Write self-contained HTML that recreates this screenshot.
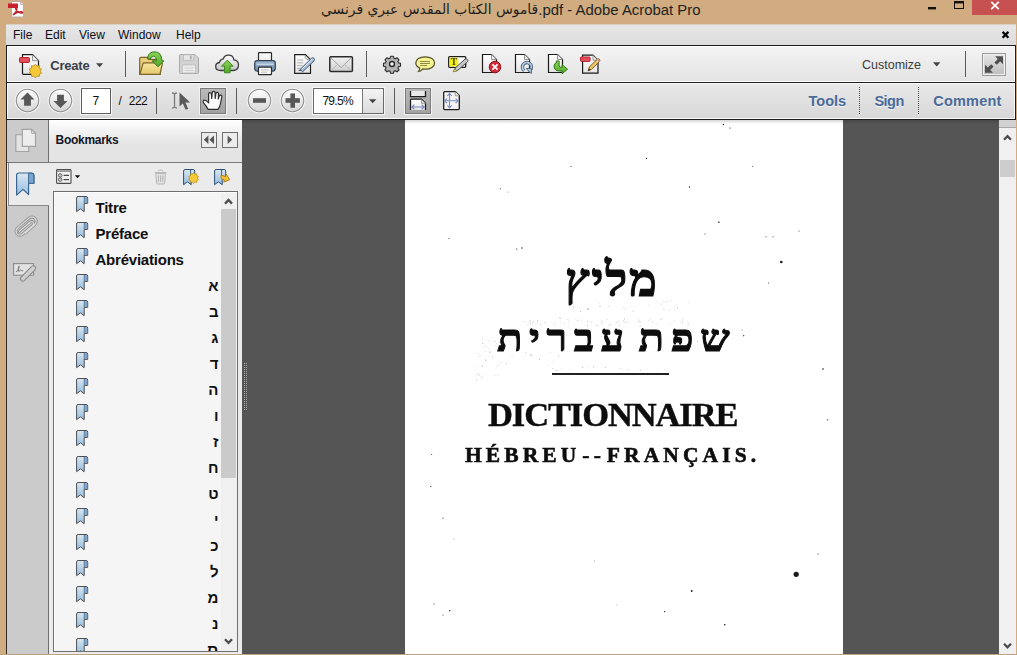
<!DOCTYPE html>
<html lang="en">
<head>
<meta charset="utf-8">
<title>Adobe Acrobat Pro</title>
<style>
*{box-sizing:border-box;margin:0;padding:0}
html,body{width:1017px;height:655px;overflow:hidden;background:#d0ac80}
body{position:relative;font-family:"Liberation Sans","DejaVu Sans",sans-serif;font-size:12px;color:#111}
.a{position:absolute}
.t{position:absolute;white-space:nowrap;line-height:1}
#ico{position:absolute;left:0;top:0;width:1017px;height:655px;overflow:hidden}
#ttext{left:321px;top:0px;height:22px;font-size:14.9px;color:#1f1f1f}
#ttext span{position:absolute;top:0;line-height:1}
#tar{left:0;font-size:13.85px;top:3px !important;font-family:"DejaVu Sans","Liberation Sans",sans-serif}
#tla{left:217.3px;top:3px !important}
#close{left:972px;top:0;width:45px;height:15px;background:#c75050}
#menu{left:6px;top:24px;width:1010px;height:21px;background:linear-gradient(#e6e6e6,#dcdcdc);border-top:1px solid #d8cfc2}
.mi{top:29px;font-size:12px;color:#0c0c1c}
.tb{left:6px;width:1010px;border:1px solid #1c1c1c}
#tb1{top:45px;height:38px;background:linear-gradient(#f4f4f4,#e3e3e3);box-shadow:inset 0 0 0 1px #fff}
#tb2{top:82px;height:38px;background:linear-gradient(#e9e9e9,#d7d7d7);box-shadow:inset 0 0 0 1px #fafafa}
.sep{width:1px;background:#5a5a5a;height:26px}
.dot{width:1px;height:27px;top:87px;background:repeating-linear-gradient(#4a4a4a 0 1px,transparent 1px 2px)}
.nav{font-weight:bold;font-size:14.5px;color:#4a6a98;top:93.6px;text-shadow:0 1px 0 #f4f4f4}
#navcol{left:7px;top:120px;width:41px;height:534px;background:#cbcbcb}
#bmhead{left:49px;top:120px;width:193px;height:42px;background:linear-gradient(#ffffff,#eeeeee 35%,#e4e4e4 60%,#e4e4e4)}
#panel{left:7px;top:163px;width:235px;height:491px;background:#ebebeb}
#bmline{left:7px;top:162px;width:235px;height:1px;background:#777}
#seltab{left:8px;top:163px;width:41px;height:43px;border-left:1px solid #8a8a8a;border-bottom:1px solid #8a8a8a}
#navlow{left:7px;top:206px;width:41px;height:448px;background:#cbcbcb}
.vdiv{left:48px;width:1px;background:#707070}
#list{left:53px;top:191px;width:185px;height:461px;background:#f5f5f5;border:1px solid #6f6f6f;box-shadow:inset 1px 1px 0 #fdfdfd}
#lsb{left:221px;top:193px;width:16px;height:458px;background:#f0f0f0}
#lthumb{left:221px;top:209px;width:15px;height:269px;background:#cacaca}
.bt{font-weight:bold;font-size:15px;color:#101010;left:95.5px;letter-spacing:-0.22px}
.he{font-weight:bold;font-size:15px;color:#101010;right:798.5px}
#doc{left:242px;top:120px;width:757px;height:534px;background:#555555}
#split{left:244px;top:363px;width:1px;height:47px;background:repeating-linear-gradient(#a9a9a9 0 1px,transparent 1px 2px)}
#split2{left:246px;top:363px;width:1px;height:47px;background:repeating-linear-gradient(#a9a9a9 0 1px,transparent 1px 2px)}
#page{left:405px;top:120px;width:438px;height:534px;background:#fff}
#vsb{left:999px;top:120px;width:17px;height:534px;background:#f0f0f0}
#vthumb{left:1000px;top:160px;width:15px;height:17px;background:#cdcdcd}
#vsplit{left:999px;top:120px;width:17px;height:8px;background:#d2d2d2;border-bottom:1px solid #a8a8a8}
.serif{font-family:"Liberation Serif","DejaVu Serif",serif;color:#0d0d0d;font-weight:bold;will-change:transform}
#pnum{left:81px;top:88px;width:30px;height:26px;background:#fff;border:1px solid #5f5f5f;box-shadow:0 0 0 1px #f6f6f6}
#zoom{left:313px;top:88px;width:71px;height:26px;background:#fff;border:1px solid #6a6a6a;box-shadow:0 0 0 1px #f6f6f6}
#zoomdd{left:362px;top:89px;width:21px;height:24px;background:linear-gradient(#f3f3f3,#dcdcdc);border-left:1px solid #7a7a7a}
.selbtn{top:88px;width:26px;height:26px;background:linear-gradient(#b9b9b9,#a2a2a2);border:1px solid #7b7b7b;box-shadow:0 0 0 1px #f2f2f2}
#expand{left:982px;top:53px;width:24px;height:23px;background:linear-gradient(#e6e6e6,#bdbdbd);border:1px solid #9a9a9a;box-shadow:inset 0 0 0 1px #f0f0f0}
.pbtn{top:132px;width:16px;height:16px;border:1px solid #707070;background:#ececec}
</style>
</head>
<body>
<div class="t" id="ttext"><span class="ar" id="tar" dir="rtl">قاموس الكتاب المقدس عبري فرنسي</span><span id="tla">.pdf - Adobe Acrobat Pro</span></div>
<div class="a" id="close"></div>
<div class="a" id="menu"></div>
<div class="t mi" style="left:13px">File</div>
<div class="t mi" style="left:45px">Edit</div>
<div class="t mi" style="left:79px">View</div>
<div class="t mi" style="left:118px">Window</div>
<div class="t mi" style="left:176px">Help</div>
<div class="a tb" id="tb1"></div>
<div class="a tb" id="tb2"></div>
<div class="a sep" style="left:125px;top:51px"></div>
<div class="a sep" style="left:366px;top:51px"></div>
<div class="a sep" style="left:965px;top:51px"></div>
<div class="a sep" style="left:156px;top:88px"></div>
<div class="a sep" style="left:236px;top:88px"></div>
<div class="a sep" style="left:394px;top:88px"></div>
<div class="t" id="create" style="left:50.2px;top:58.5px;font-weight:bold;font-size:13px;letter-spacing:-0.2px;color:#3b3f48">Create</div>
<div class="t" id="cust" style="left:862px;top:58.7px;font-size:12.5px;color:#3c3c3c">Customize</div>
<div class="a" id="expand"></div>
<div class="a" id="pnum"></div>
<div class="t" id="p7" style="left:92.6px;top:95px;font-size:12px;color:#111">7</div>
<div class="t" id="p222" style="left:118.5px;top:95px;font-size:12px;color:#111;word-spacing:4.6px;letter-spacing:-0.5px">/ 222</div>
<div class="a selbtn" style="left:200px"></div>
<div class="a" id="zoom"></div>
<div class="a" id="zoomdd"></div>
<div class="t" id="z79" style="left:322.4px;top:95px;font-size:12px;color:#111;letter-spacing:-0.7px">79.5%</div>
<div class="a selbtn" style="left:405px"></div>
<div class="a dot" style="left:859px"></div>
<div class="a dot" style="left:918px"></div>
<div class="t nav" id="ntools" style="left:808.5px">Tools</div>
<div class="t nav" id="nsign" style="left:874.4px;letter-spacing:-0.5px">Sign</div>
<div class="t nav" id="ncomm" style="left:933.3px;letter-spacing:0.2px">Comment</div>
<div class="a" style="left:6px;top:120px;width:1px;height:534px;background:#2e2b26"></div>
<div class="a" id="navcol"></div>
<div class="a" id="bmhead"></div>
<div class="a" id="panel"></div>
<div class="a" id="bmline"></div>
<div class="a" id="navlow"></div>
<div class="a" id="seltab"></div>
<div class="a vdiv" style="top:120px;height:42px"></div>
<div class="a vdiv" style="top:206px;height:448px"></div>
<div class="t" id="bmk" style="left:55.6px;top:134px;font-weight:bold;font-size:12px;letter-spacing:-0.3px;color:#15151f">Bookmarks</div>
<div class="a pbtn" style="left:201px"></div>
<div class="a pbtn" style="left:222px"></div>
<div class="a" id="list"></div>
<div class="a" id="lsb"></div>
<div class="a" id="lthumb"></div>
<div class="t bt" style="top:200px">Titre</div>
<div class="t bt" style="top:226px">Préface</div>
<div class="t bt" style="top:252px">Abréviations</div>
<div class="t he" style="top:278px" dir="rtl">א</div>
<div class="t he" style="top:304px" dir="rtl">ב</div>
<div class="t he" style="top:330px" dir="rtl">ג</div>
<div class="t he" style="top:356px" dir="rtl">ד</div>
<div class="t he" style="top:382px" dir="rtl">ה</div>
<div class="t he" style="top:408px" dir="rtl">ו</div>
<div class="t he" style="top:434px" dir="rtl">ז</div>
<div class="t he" style="top:460px" dir="rtl">ח</div>
<div class="t he" style="top:486px" dir="rtl">ט</div>
<div class="t he" style="top:512px" dir="rtl">י</div>
<div class="t he" style="top:538px" dir="rtl">כ</div>
<div class="t he" style="top:564px" dir="rtl">ל</div>
<div class="t he" style="top:590px" dir="rtl">מ</div>
<div class="t he" style="top:616px" dir="rtl">נ</div>
<div class="a" style="left:54px;top:634px;width:167px;height:17px;overflow:hidden"><div class="t he" style="right:3px;top:8px" dir="rtl">ס</div></div>
<div class="a" id="doc"></div>
<div class="a" id="split"></div>
<div class="a" id="split2"></div>
<div class="a" id="page"></div>
<div class="a" style="left:242px;top:120px;width:757px;height:4px;background:linear-gradient(rgba(0,0,0,.16),rgba(0,0,0,0))"></div>
<div class="a" id="vsb"></div>
<div class="a" style="left:0;top:654px;width:1017px;height:1px;background:#bfa27c"></div>
<div class="a" id="vthumb"></div>
<div class="a" id="vsplit"></div>
<div class="t serif" id="h1" dir="rtl" style="left:564.8px;top:256.5px;font-size:47px;letter-spacing:1.75px;-webkit-text-stroke:1.1px #0d0d0d">מליץ</div>
<div class="t serif" id="h2" dir="rtl" style="left:497px;top:320px;font-size:37.5px;letter-spacing:5.8px;word-spacing:-8.2px;transform:scaleX(1.12);transform-origin:0 0;-webkit-text-stroke:0.9px #0d0d0d">שפת עברית</div>
<div class="a" style="left:552px;top:373px;width:117px;height:2px;background:#222"></div>
<div class="t serif" id="d1" style="left:487.5px;top:396.5px;font-size:34.5px;letter-spacing:-1.1px;-webkit-text-stroke:0.4px #0d0d0d">DICTIONNAIRE</div>
<div class="t serif" id="d2" style="left:465px;top:444.5px;font-size:21.5px;letter-spacing:4.1px;word-spacing:-7.5px;-webkit-text-stroke:0.6px #0d0d0d">HÉBREU -- FRANÇAIS.</div>
<svg id="ico" viewBox="0 0 1017 655" width="1017" height="655">
<defs>
<linearGradient id="gBtn" x1="0" y1="0" x2="0" y2="1"><stop offset="0" stop-color="#ffffff"/><stop offset="1" stop-color="#d6d6d6"/></linearGradient>
<linearGradient id="gPage" x1="0" y1="0" x2="0" y2="1"><stop offset="0" stop-color="#ffffff"/><stop offset="1" stop-color="#e4e4e4"/></linearGradient>
<linearGradient id="gFold" x1="0" y1="0" x2="0" y2="1"><stop offset="0" stop-color="#f7e6a0"/><stop offset="1" stop-color="#e3c76c"/></linearGradient>
<linearGradient id="gGreen" x1="0" y1="0" x2="0" y2="1"><stop offset="0" stop-color="#8fd45a"/><stop offset="1" stop-color="#4fa52b"/></linearGradient>
<linearGradient id="gBm" x1="0" y1="0" x2="0" y2="1"><stop offset="0" stop-color="#dbe7f1"/><stop offset="1" stop-color="#94bde0"/></linearGradient>
<linearGradient id="gCloud" x1="0" y1="0" x2="0" y2="1"><stop offset="0" stop-color="#ffffff"/><stop offset="1" stop-color="#c4c4c4"/></linearGradient>
<linearGradient id="gEnv" x1="0" y1="0" x2="0" y2="1"><stop offset="0" stop-color="#f2f2f2"/><stop offset="1" stop-color="#cfcfcf"/></linearGradient>
<linearGradient id="gPrn" x1="0" y1="0" x2="0" y2="1"><stop offset="0" stop-color="#9fb9d2"/><stop offset="1" stop-color="#6d8cab"/></linearGradient>
<path id="pg" d="M0.5,0.5 h9 l5,5 v13 h-14 z"/>
<path id="bm" d="M0.6,2 q0,-1.5 1.5,-1.5 h8 q1.6,0 1.6,1.6 v5.3 h-3.5 v8.3 l-3.8,-2.9 l-3.8,2.9 z"/>
</defs>

<!-- title bar pdf icon -->
<g transform="translate(8,1)">
<path d="M3.5,0.5 h9 l3,3 v12.5 h-12 z" fill="#fff" stroke="#b9a9a9"/>
<path d="M12.5,0.5 v3 h3" fill="#eee" stroke="#b9a9a9" stroke-width=".8"/>
<path d="M5.3,13.6 c2.4,-1.8 3.6,-4.6 3.5,-7 c-0.1,-1.6 -1.7,-1.2 -1.2,0.6 c0.8,2.8 3.4,4.6 6,4.8 c1.4,0.1 1.1,-1.3 -0.6,-1.2 c-2.8,0.2 -5.6,1.2 -7.7,2.8 z" fill="none" stroke="#c01f2b" stroke-width="1.5" stroke-linejoin="round"/>
<rect x="0" y="2.5" width="10" height="4.5" fill="#c8202f"/>
</g>
<!-- window controls -->
<rect x="928" y="7" width="8" height="2.4" fill="#111"/>
<rect x="954.5" y="1.5" width="9" height="7" fill="none" stroke="#111"/>
<rect x="954" y="1" width="10" height="2.4" fill="#111"/>
<path d="M991.2,1.8 l7.6,7.4 M998.8,1.8 l-7.6,7.4" stroke="#fff" stroke-width="1.7" fill="none"/>
<path d="M1002.6,31.9 l5.8,5.8 M1008.4,31.9 l-5.8,5.8" stroke="#000" stroke-width="2.2" fill="none"/>

<!-- ===== toolbar 1 ===== -->
<!-- create -->
<g transform="translate(19,54)">
<path d="M3.5,0.7 h10 l6,6 v12.8 q0,0.8 -0.8,0.8 h-14.4 q-0.8,0 -0.8,-0.8 z" fill="url(#gPage)" stroke="#1a1a1a" stroke-width="1.2"/>
<path d="M13.5,0.7 v6 h6" fill="#e9e9e9" stroke="#8a8a8a" stroke-width=".9"/>
<rect x="0.5" y="3.5" width="10" height="5" rx="1" fill="#e4505a" stroke="#b31f2e"/>
<path d="M16.4,10.2 l1.5,1.9 2.4,-0.4 0.1,2.4 2.2,1 -1.3,2 1.3,2 -2.2,1 -0.1,2.4 -2.4,-0.4 -1.5,1.9 -1.5,-1.9 -2.4,0.4 -0.1,-2.4 -2.2,-1 1.3,-2 -1.3,-2 2.2,-1 0.1,-2.4 2.4,0.4 z" fill="#f4c838" stroke="#b88a1b" stroke-width=".8"/>
</g>
<path d="M96,63.3 h7.2 l-3.6,4 z" fill="#444"/>
<!-- open folder -->
<g transform="translate(139,52)">
<path d="M0.7,22.3 v-16 q0,-1 1,-1 h6 l2,2 h10.5 q1,0 1,1 v14 z" fill="#e9cf7a" stroke="#7a6328" stroke-width="1.2"/>
<path d="M0.9,22.3 l3,-10.5 q0.3,-1 1.3,-1 h17.3 q1,0 0.8,1 l-2.3,10.5 z" fill="url(#gFold)" stroke="#7a6328" stroke-width="1.2"/>
<path d="M8.4,5.8 Q10,-0.2 15.6,-0.2 Q22.6,0 23,8.8 L24.8,8.8 L19,14.8 L13.2,8.8 L17.4,8.8 Q17.4,4.4 14.6,4.2 Q12.2,4.2 11.2,7.2 Z" fill="url(#gGreen)" stroke="#2f7a14" stroke-width="1" stroke-linejoin="round"/>
</g>
<!-- save (disabled) -->
<g transform="translate(179,54)">
<path d="M0.5,1.5 q0,-1 1,-1 h14.5 l3.5,3.5 v14.5 q0,1 -1,1 h-17 q-1,0 -1,-1 z" fill="#d2d2d2" stroke="#a8a8a8"/>
<rect x="4.5" y="0.8" width="10" height="5.5" fill="#e6e6e6" stroke="#b5b5b5" stroke-width=".7"/>
<rect x="10.8" y="1.6" width="2" height="3.6" fill="#b0b0b0"/>
<rect x="3.5" y="11" width="13" height="8" fill="#ececec" stroke="#b8b8b8" stroke-width=".7"/>
<path d="M5.5,14 h9 M5.5,16.5 h9" stroke="#cfcfcf" stroke-width="1"/>
</g>
<!-- cloud upload -->
<g transform="translate(215,54)">
<path d="M5.5,16.5 q-4.8,0 -4.8,-4 q0,-3.4 3.8,-4 q0.6,-3.3 3.8,-3.6 q1.2,-3.7 5.2,-3.7 q4.6,0 5.4,4.6 q4.6,0.6 4.6,5 q0,5.7 -5.5,5.7 z" fill="url(#gCloud)" stroke="#3d3d3d" stroke-width="1.3"/>
<path d="M12.3,6.2 l5.8,6 h-3 v6.6 h-5.6 v-6.6 h-3 z" fill="url(#gGreen)" stroke="#3a8a1c" stroke-width="1"/>
</g>
<!-- printer -->
<g transform="translate(254,52)">
<rect x="4.5" y="0.7" width="13" height="10" rx="0.8" fill="url(#gPage)" stroke="#2b2b2b" stroke-width="1.2"/>
<rect x="0.7" y="8.7" width="20.6" height="10.4" rx="2.5" fill="url(#gPrn)" stroke="#2f3f52" stroke-width="1.2"/>
<path d="M2.5,12.2 h17" stroke="#dfe9f3" stroke-width="1"/>
<rect x="4.5" y="15.2" width="13" height="7.4" rx="0.6" fill="#fbfbfb" stroke="#2b2b2b" stroke-width="1.2"/>
<path d="M7,18 h8 M7,20.2 h6" stroke="#b5b5b5" stroke-width=".9"/>
</g>
<!-- edit / sign doc -->
<g transform="translate(294,54)">
<path d="M0.7,0.7 h10.8 l5,5 v13.6 h-15.8 z" fill="url(#gPage)" stroke="#1f1f1f" stroke-width="1.2"/>
<path d="M11.2,1 q-0.6,3.4 1.6,4.4 q1.8,0.5 3.4,0.3" fill="none" stroke="#8a8a8a" stroke-width=".9"/>
<path d="M3.3,6 h6 M3.3,8.8 h6 M3.3,11.6 h5 M3.3,14.4 h3.4" stroke="#a9a9a9" stroke-width=".9"/>
<path d="M4,17 l2.2,-1.4 l1,1.2 z" fill="#333"/>
<path d="M6.2,15.4 l11.4,-11.2 q1.3,-0.9 2.4,0.2 q1.1,1.2 0.1,2.4 l-11.5,11 z" fill="#a9c3dc" stroke="#3d5570" stroke-width="1"/>
<path d="M8.6,14.3 l9.8,-9.5" stroke="#e8f0f8" stroke-width="1"/>
</g>
<!-- envelope -->
<g transform="translate(329,56)">
<rect x="0.8" y="0.8" width="22.6" height="14.6" rx="1" fill="url(#gEnv)" stroke="#2b2b2b" stroke-width="1.5"/>
<path d="M2,2 l10.1,9.6 l10.1,-9.6" fill="none" stroke="#a4a4a4" stroke-width="1"/>
<path d="M2.2,14.2 l6.8,-6 M22,14.2 l-6.8,-6" fill="none" stroke="#b9b9b9" stroke-width=".9"/>
</g>
<!-- gear -->
<g transform="translate(392,64) scale(0.86)">
<path d="M-1.7,-9 h3.4 l0.5,2.3 l1.6,0.7 l2,-1.3 l2.4,2.4 l-1.3,2 l0.7,1.6 l2.3,0.5 v3.4 l-2.3,0.5 l-0.7,1.6 l1.3,2 l-2.4,2.4 l-2,-1.3 l-1.6,0.7 l-0.5,2.3 h-3.4 l-0.5,-2.3 l-1.6,-0.7 l-2,1.3 l-2.4,-2.4 l1.3,-2 l-0.7,-1.6 l-2.3,-0.5 v-3.4 l2.3,-0.5 l0.7,-1.6 l-1.3,-2 l2.4,-2.4 l2,1.3 l1.6,-0.7 z" fill="#b4b4b4" stroke="#2a2a2a" stroke-width="1.3" stroke-linejoin="round"/>
<circle r="2.9" fill="#efefef" stroke="#2a2a2a" stroke-width="1.6"/>
</g>
<!-- speech bubble -->
<g transform="translate(415,56)">
<path d="M10.2,0.8 c5.6,0 9.4,2.7 9.4,6.2 c0,3.6 -4,6.2 -9,6.2 c-1,0 -2,-0.1 -2.8,-0.3 c-1,1.4 -2.4,2.4 -4.2,2.6 c0.8,-0.9 1.2,-2.2 1,-3.6 c-2.4,-1.1 -3.8,-2.8 -3.8,-4.9 c0,-3.5 3.8,-6.2 9.4,-6.2 z" fill="#f5f291" stroke="#55512c" stroke-width="1.2"/>
<path d="M5,5.5 h10 M5,7.5 h10 M5,9.5 h7" stroke="#8f8c48" stroke-width="1" shape-rendering="crispEdges"/>
</g>
<!-- highlight text -->
<g transform="translate(448,56)">
<rect x="0.7" y="0.7" width="17" height="10.6" rx="1" fill="#fdfdfd" stroke="#1c1c1c" stroke-width="1.3"/>
<rect x="1.6" y="1.6" width="8.6" height="8.8" fill="#f4f01a"/>
<text x="5.9" y="9.4" font-family="Liberation Serif, DejaVu Serif, serif" font-weight="bold" font-size="9.5" text-anchor="middle" fill="#4a4400">T</text>
<path d="M6,15 l1.6,-3.4 l9.6,-8.6 q1.2,-0.6 2.2,0.4 q1,1.1 0.2,2.3 l-9.7,8.5 z" fill="#c9c9c9" stroke="#4b4b4b" stroke-width="1"/>
<path d="M5.2,15.8 l1.4,-3 l2.4,2.2 z" fill="#f2ef8a" stroke="#77743a" stroke-width=".8"/>
</g>
<!-- page + red x -->
<g transform="translate(482,54)">
<use href="#pg" fill="url(#gPage)" stroke="#1a1a1a" stroke-width="1.2"/>
<path d="M9.5,0.5 v5 h5" fill="#ececec" stroke="#8a8a8a" stroke-width=".9"/>
<circle cx="13" cy="13" r="5.8" fill="#d02b38" stroke="#8f1420" stroke-width="1"/>
<path d="M10.4,10.4 l5.2,5.2 M15.6,10.4 l-5.2,5.2" stroke="#fff" stroke-width="1.7"/>
</g>
<!-- page + rotate -->
<g transform="translate(515,54)">
<use href="#pg" fill="url(#gPage)" stroke="#1a1a1a" stroke-width="1.2"/>
<path d="M9.5,0.5 v5 h5" fill="#ececec" stroke="#8a8a8a" stroke-width=".9"/>
<path d="M9.2,16.6 a4.5,4.5 0 1 1 4.4,0.6" fill="none" stroke="#48607c" stroke-width="3.4"/>
<path d="M9.2,16.6 a4.5,4.5 0 1 1 4.4,0.6" fill="none" stroke="#b4cce4" stroke-width="1.7"/>
<path d="M11.2,14.6 h5.2 v5 z" fill="#b4cce4" stroke="#48607c" stroke-width=".9" stroke-linejoin="round"/>
</g>
<!-- page + green arrow -->
<g transform="translate(548,54)">
<use href="#pg" fill="url(#gPage)" stroke="#1a1a1a" stroke-width="1.2"/>
<path d="M9.5,0.5 v5 h5" fill="#ececec" stroke="#8a8a8a" stroke-width=".9"/>
<path d="M8.3,7 h2.8 v4.6 q0,1.8 2,1.8 h1 v-2.8 l5.4,4.6 l-5.4,4.6 v-2.8 h-2.6 q-5.4,0 -5.4,-5 q0,-2.6 2.2,-3 z" fill="url(#gGreen)" stroke="#2f7a14" stroke-width="1"/>
</g>
<!-- page + label + pencil -->
<g transform="translate(580,54)">
<path d="M2.6,1.2 h10.4 l5,5 v13 h-15.4 z" fill="url(#gPage)" stroke="#1a1a1a" stroke-width="1.2"/>
<path d="M13,1.2 v5 h5" fill="#ececec" stroke="#8a8a8a" stroke-width=".9"/>
<rect x="0.5" y="3" width="9.6" height="4.4" rx=".8" fill="#e4505a" stroke="#b31f2e"/>
<path d="M8.2,16.8 l1.2,-3.8 l8,-8 q1,-0.6 2,0.3 q0.9,1 0.2,2 l-8,8 z" fill="#f0c569" stroke="#7a5a1c" stroke-width="1"/>
<path d="M8.2,16.8 l0.8,-2.4 l1.6,1.6 z" fill="#222"/>
<path d="M17,5.4 l2.4,2.4" stroke="#e79aa8" stroke-width="1.6"/>
</g>
<!-- customize arrow -->
<path d="M933,62.3 h7.4 l-3.7,4.1 z" fill="#444"/>
<!-- expand icon -->
<g transform="translate(982,53)" fill="#4f4f4f">
<path d="M13,3.2 h8 v8 l-2.8,-2.8 l-3.4,3.4 l-2.4,-2.4 l3.4,-3.4 z"/>
<path d="M11,19.8 h-8 v-8 l2.8,2.8 l3.4,-3.4 l2.4,2.4 l-3.4,3.4 z"/>
</g>

<!-- ===== toolbar 2 ===== -->
<g fill="none" stroke="#f4f4f4" stroke-width="1.2"><circle cx="27.5" cy="100.5" r="12.2"/><circle cx="60.5" cy="100.5" r="12.2"/><circle cx="259.5" cy="100.5" r="12.2"/><circle cx="292.5" cy="100.5" r="12.2"/></g>
<g fill="url(#gBtn)" stroke="#939393" stroke-width="1.1">
<circle cx="27.5" cy="100.5" r="11.2"/>
<circle cx="60.5" cy="100.5" r="11.2"/>
<circle cx="259.5" cy="100.5" r="11.2"/>
<circle cx="292.5" cy="100.5" r="11.2"/>
</g>
<g fill="#585858">
<path d="M27.5,92.6 l7,7 h-3.6 v6.2 h-6.8 v-6.2 h-3.6 z"/>
<path d="M60.5,108 l7,-7 h-3.6 v-6.2 h-6.8 v6.2 h-3.6 z"/>
<rect x="253" y="98.2" width="13" height="4.6"/>
<rect x="285.5" y="98.2" width="14.4" height="4.6"/>
<rect x="290.4" y="93.4" width="4.6" height="14.4"/>
</g>
<!-- select tool -->
<path d="M172,93 q1.8,0 2.5,1 q0.7,-1 2.5,-1 M174.5,94 v13 M172,108 q1.8,0 2.5,-1 q0.7,1 2.5,1" fill="none" stroke="#7a7a7a" stroke-width="1.3"/>
<path d="M179.5,92.4 v14 l3.3,-3 l2.8,6.4 l2.6,-1.1 l-2.8,-6.2 h4.8 z" fill="#5a5a5a"/>
<!-- hand -->
<g transform="translate(200,88)">
<path d="M8.2,21.4 Q6.5,18 3.6,14.8 Q2.5,12.8 4.1,12.2 Q5.8,11.9 8.6,14.8 L8.6,6 Q8.6,4.6 10,4.6 Q11.4,4.6 11.4,6 L11.7,10.5 L12.2,4.8 Q12.3,3.4 13.7,3.4 Q15.1,3.4 15.1,4.8 L15.2,10.5 L15.9,5.5 Q16.1,4.2 17.3,4.3 Q18.6,4.5 18.5,5.8 L18.3,11 L19.2,8.1 Q19.7,6.8 20.9,7.1 Q22,7.5 21.8,8.8 L20.6,15 Q20,19 18,21.4 Z" fill="#fafafa" stroke="#2e2e2e" stroke-width="1.2" stroke-linejoin="round"/>
</g>
<!-- zoom dropdown arrow -->
<path d="M369,99.2 h7.4 l-3.7,4 z" fill="#444"/>
<!-- fit width -->
<g transform="translate(405,88)">
<path d="M5.5,3 v5.6 h15 v-5.6" fill="#e9e9e9" stroke="#1f1f1f" stroke-width="1.3"/>
<path d="M5.5,22 v-9.8 q0,-1 1,-1 h10 l4,4 v6.8" fill="url(#gPage)" stroke="#1f1f1f" stroke-width="1.3"/>
<path d="M16.5,11.4 v4 h4" fill="#ececec" stroke="#8a8a8a" stroke-width=".8"/>
<path d="M7,19 h12 M9.4,16.6 l-2.6,2.4 l2.6,2.4 M16.6,16.6 l2.6,2.4 l-2.6,2.4" fill="none" stroke="#7c86c0" stroke-width="1.1"/>
</g>
<!-- fit page -->
<g transform="translate(443,91)">
<path d="M0.7,1.6 q0,-1 1,-1 h10.6 l4,4 v13 q0,1 -1,1 h-13.6 q-1,0 -1,-1 z" fill="#f4f4f4" stroke="#1f1f1f" stroke-width="1.3"/>
<path d="M12.3,0.8 v4 h4" fill="#ececec" stroke="#8a8a8a" stroke-width=".8"/>
<path d="M6.5,2.6 v14 M1.8,9.8 h13" stroke="#7c8ec8" stroke-width="1.1"/>
<path d="M4.4,4.8 l2.1,-2.4 l2.1,2.4 M4.4,14.4 l2.1,2.4 l2.1,-2.4 M4,7.6 l-2.4,2.2 l2.4,2.2 M12.6,7.6 l2.4,2.2 l-2.4,2.2" fill="none" stroke="#7c8ec8" stroke-width="1.1"/>
</g>

<!-- ===== nav column ===== -->
<g transform="translate(15.2,128.8) scale(1.08,1.06)">
<path d="M0.6,5.6 h12 v15.8 h-12 z" fill="#e4e4e4" stroke="#a3a3a3" stroke-width="1.1"/>
<path d="M6.6,0.6 h8.6 l3.6,3.6 v12.4 h-12.2 z" fill="#ededed" stroke="#a3a3a3" stroke-width="1.1"/>
<path d="M15.2,0.8 v3.4 h3.4" fill="none" stroke="#9d9d9d" stroke-width=".9"/>
</g>
<g transform="translate(16,172.4) scale(1,0.94)">
<path d="M0.6,3 q0,-2.4 2.4,-2.4 h12.4 q2.6,0 2.6,2.6 v8.4 h-5.4 v12 l-5.6,-5.6 l-6.4,6.2 z" fill="url(#gBm)" stroke="#3a678f" stroke-width="1.2" stroke-linejoin="round"/>
<path d="M12.6,0.8 v10.8 h5.2 v-8.2 q0,-2.6 -2.6,-2.6 z" fill="#79a5cf" stroke="#3a678f" stroke-width="1"/>
</g>
<g transform="translate(15,216)">
<path d="M4.4,15.4 l10.6,-9.2 q1.8,-1.4 3.2,0 q1.2,1.6 -0.4,3.2 l-9.6,8.4 q-3.6,2.8 -6.2,0 q-2.4,-3 0.8,-6 l10.8,-9.4 q3.8,-3 6.6,0.2 q2.4,3.2 -0.8,6.4 l-9,8" fill="none" stroke="#8e8e8e" stroke-width="2.8" stroke-linecap="round"/>
<path d="M4.4,15.4 l10.6,-9.2 q1.8,-1.4 3.2,0 q1.2,1.6 -0.4,3.2 l-9.6,8.4 q-3.6,2.8 -6.2,0 q-2.4,-3 0.8,-6 l10.8,-9.4 q3.8,-3 6.6,0.2 q2.4,3.2 -0.8,6.4 l-9,8" fill="none" stroke="#dedede" stroke-width="1.2" stroke-linecap="round"/>
</g>
<g transform="translate(13,262)">
<rect x="0.6" y="1.6" width="20" height="11.6" fill="#e2e2e2" stroke="#8c8c8c" stroke-width="1.1"/>
<path d="M3,10 q2.4,-1 3.2,-5 q0.2,-1.6 -0.6,-0.4 q-1,3.4 0.4,5 q1.4,-2.6 2.4,-1.4 q0.6,1.6 1.8,0.4" fill="none" stroke="#7a7a7a" stroke-width="1"/>
<path d="M8.4,18.6 q-1.8,-1.6 -0.4,-3.2 l10.6,-11 q1.8,-1.4 3.4,0 q1.4,1.8 0,3.4 l-10.8,10.8 q-1.4,1 -2.8,0 z" fill="#cfcfcf" stroke="#8a8a8a" stroke-width="1.1"/>
</g>

<!-- ===== bookmarks toolbar ===== -->
<g transform="translate(56,169)">
<rect x="0.6" y="0.6" width="14.4" height="13.8" rx="0.8" fill="#f2f2f2" stroke="#4a4a4a" stroke-width="1.1"/>
<path d="M0.8,2.2 h14" stroke="#8a8a8a" stroke-width="1.4"/>
<circle cx="4.2" cy="6.4" r="1.8" fill="#c9c9c9" stroke="#555" stroke-width=".9"/>
<circle cx="4.2" cy="10.6" r="1.8" fill="#c9c9c9" stroke="#555" stroke-width=".9"/>
<path d="M7.6,6.4 h5.4 M7.6,10.6 h5.4" stroke="#4a4a4a" stroke-width="1.1"/>
</g>
<path d="M74.8,175.2 h5.4 l-2.7,3 z" fill="#111"/>
<g transform="translate(154,169)" fill="none" stroke="#b4b4b4" stroke-width="1">
<path d="M1.8,4.4 h9.6 l-0.7,9.6 q-0.1,1 -1.1,1 h-6 q-1,0 -1.1,-1 z" fill="#e2e2e2"/>
<path d="M0.6,3.6 h12 M4.4,2.4 q0,-1.4 1.4,-1.4 h1.6 q1.4,0 1.4,1.4" />
<path d="M4.4,6.4 v6.4 M6.6,6.4 v6.4 M8.8,6.4 v6.4"/>
</g>
<g transform="translate(183,169)">
<use href="#bm" fill="url(#gBm)" stroke="#2b4f74" stroke-width="1"/>
<path d="M7.6,0.8 v7 h3.6" fill="none" stroke="#2b4f74" stroke-width=".9"/>
<path d="M10.6,3.6 l1.2,1.5 1.9,-0.3 0.1,1.9 1.7,0.8 -1,1.6 1,1.6 -1.7,0.8 -0.1,1.9 -1.9,-0.3 -1.2,1.5 -1.2,-1.5 -1.9,0.3 -0.1,-1.9 -1.7,-0.8 1,-1.6 -1,-1.6 1.7,-0.8 0.1,-1.9 1.9,0.3 z" fill="#f4c838" stroke="#b88a1b" stroke-width=".7"/>
</g>
<g transform="translate(214,169)">
<use href="#bm" fill="url(#gBm)" stroke="#2b4f74" stroke-width="1"/>
<path d="M7.6,0.8 v7 h3.6" fill="none" stroke="#2b4f74" stroke-width=".9"/>
<path d="M6.4,7.4 h4.6 v-2.4 l5,4.2 l-5,4.2 v-2.4 h-2 q-2.6,0 -2.6,-3.6 z" fill="#f4bf38" stroke="#a67614" stroke-width=".8" transform="rotate(18 11 9)"/>
</g>
<!-- panel collapse buttons -->
<path d="M208.4,135.6 v8.4 l-4.6,-4.2 z M214,135.6 v8.4 l-4.6,-4.2 z" fill="#555"/>
<path d="M227.6,135.6 v8.4 l4.6,-4.2 z" fill="#555"/>

<!-- list scrollbar arrows -->
<path d="M225,203.6 l3.5,-3.6 l3.5,3.6" fill="none" stroke="#4d4d4d" stroke-width="2.3"/>
<path d="M225,639.2 l3.5,3.6 l3.5,-3.6" fill="none" stroke="#4d4d4d" stroke-width="2.3"/>
<!-- doc scrollbar arrows -->
<path d="M1004,139.8 l3.5,-3.6 l3.5,3.6" fill="none" stroke="#4d4d4d" stroke-width="2.3"/>
<path d="M1004,643.8 l3.5,3.6 l3.5,-3.6" fill="none" stroke="#4d4d4d" stroke-width="2.3"/>
<!-- splitter grip -->

<clipPath id="cl"><rect x="54" y="192" width="167" height="459"/></clipPath>
<g id="bmrows" clip-path="url(#cl)">
<g transform="translate(76,196)"><use href="#bm" fill="url(#gBm)" stroke="#4c4f55" stroke-width="1"/><path d="M8.2,1.1 h2.1 q0.9,0 0.9,0.9 v4.9 h-3 z" fill="#7fa6cc"/><path d="M8.2,0.8 v6.6" fill="none" stroke="#5d6f85" stroke-width=".8"/></g>
<g transform="translate(76,222)"><use href="#bm" fill="url(#gBm)" stroke="#4c4f55" stroke-width="1"/><path d="M8.2,1.1 h2.1 q0.9,0 0.9,0.9 v4.9 h-3 z" fill="#7fa6cc"/><path d="M8.2,0.8 v6.6" fill="none" stroke="#5d6f85" stroke-width=".8"/></g>
<g transform="translate(76,248)"><use href="#bm" fill="url(#gBm)" stroke="#4c4f55" stroke-width="1"/><path d="M8.2,1.1 h2.1 q0.9,0 0.9,0.9 v4.9 h-3 z" fill="#7fa6cc"/><path d="M8.2,0.8 v6.6" fill="none" stroke="#5d6f85" stroke-width=".8"/></g>
<g transform="translate(76,274)"><use href="#bm" fill="url(#gBm)" stroke="#4c4f55" stroke-width="1"/><path d="M8.2,1.1 h2.1 q0.9,0 0.9,0.9 v4.9 h-3 z" fill="#7fa6cc"/><path d="M8.2,0.8 v6.6" fill="none" stroke="#5d6f85" stroke-width=".8"/></g>
<g transform="translate(76,300)"><use href="#bm" fill="url(#gBm)" stroke="#4c4f55" stroke-width="1"/><path d="M8.2,1.1 h2.1 q0.9,0 0.9,0.9 v4.9 h-3 z" fill="#7fa6cc"/><path d="M8.2,0.8 v6.6" fill="none" stroke="#5d6f85" stroke-width=".8"/></g>
<g transform="translate(76,326)"><use href="#bm" fill="url(#gBm)" stroke="#4c4f55" stroke-width="1"/><path d="M8.2,1.1 h2.1 q0.9,0 0.9,0.9 v4.9 h-3 z" fill="#7fa6cc"/><path d="M8.2,0.8 v6.6" fill="none" stroke="#5d6f85" stroke-width=".8"/></g>
<g transform="translate(76,352)"><use href="#bm" fill="url(#gBm)" stroke="#4c4f55" stroke-width="1"/><path d="M8.2,1.1 h2.1 q0.9,0 0.9,0.9 v4.9 h-3 z" fill="#7fa6cc"/><path d="M8.2,0.8 v6.6" fill="none" stroke="#5d6f85" stroke-width=".8"/></g>
<g transform="translate(76,378)"><use href="#bm" fill="url(#gBm)" stroke="#4c4f55" stroke-width="1"/><path d="M8.2,1.1 h2.1 q0.9,0 0.9,0.9 v4.9 h-3 z" fill="#7fa6cc"/><path d="M8.2,0.8 v6.6" fill="none" stroke="#5d6f85" stroke-width=".8"/></g>
<g transform="translate(76,404)"><use href="#bm" fill="url(#gBm)" stroke="#4c4f55" stroke-width="1"/><path d="M8.2,1.1 h2.1 q0.9,0 0.9,0.9 v4.9 h-3 z" fill="#7fa6cc"/><path d="M8.2,0.8 v6.6" fill="none" stroke="#5d6f85" stroke-width=".8"/></g>
<g transform="translate(76,430)"><use href="#bm" fill="url(#gBm)" stroke="#4c4f55" stroke-width="1"/><path d="M8.2,1.1 h2.1 q0.9,0 0.9,0.9 v4.9 h-3 z" fill="#7fa6cc"/><path d="M8.2,0.8 v6.6" fill="none" stroke="#5d6f85" stroke-width=".8"/></g>
<g transform="translate(76,456)"><use href="#bm" fill="url(#gBm)" stroke="#4c4f55" stroke-width="1"/><path d="M8.2,1.1 h2.1 q0.9,0 0.9,0.9 v4.9 h-3 z" fill="#7fa6cc"/><path d="M8.2,0.8 v6.6" fill="none" stroke="#5d6f85" stroke-width=".8"/></g>
<g transform="translate(76,482)"><use href="#bm" fill="url(#gBm)" stroke="#4c4f55" stroke-width="1"/><path d="M8.2,1.1 h2.1 q0.9,0 0.9,0.9 v4.9 h-3 z" fill="#7fa6cc"/><path d="M8.2,0.8 v6.6" fill="none" stroke="#5d6f85" stroke-width=".8"/></g>
<g transform="translate(76,508)"><use href="#bm" fill="url(#gBm)" stroke="#4c4f55" stroke-width="1"/><path d="M8.2,1.1 h2.1 q0.9,0 0.9,0.9 v4.9 h-3 z" fill="#7fa6cc"/><path d="M8.2,0.8 v6.6" fill="none" stroke="#5d6f85" stroke-width=".8"/></g>
<g transform="translate(76,534)"><use href="#bm" fill="url(#gBm)" stroke="#4c4f55" stroke-width="1"/><path d="M8.2,1.1 h2.1 q0.9,0 0.9,0.9 v4.9 h-3 z" fill="#7fa6cc"/><path d="M8.2,0.8 v6.6" fill="none" stroke="#5d6f85" stroke-width=".8"/></g>
<g transform="translate(76,560)"><use href="#bm" fill="url(#gBm)" stroke="#4c4f55" stroke-width="1"/><path d="M8.2,1.1 h2.1 q0.9,0 0.9,0.9 v4.9 h-3 z" fill="#7fa6cc"/><path d="M8.2,0.8 v6.6" fill="none" stroke="#5d6f85" stroke-width=".8"/></g>
<g transform="translate(76,586)"><use href="#bm" fill="url(#gBm)" stroke="#4c4f55" stroke-width="1"/><path d="M8.2,1.1 h2.1 q0.9,0 0.9,0.9 v4.9 h-3 z" fill="#7fa6cc"/><path d="M8.2,0.8 v6.6" fill="none" stroke="#5d6f85" stroke-width=".8"/></g>
<g transform="translate(76,612)"><use href="#bm" fill="url(#gBm)" stroke="#4c4f55" stroke-width="1"/><path d="M8.2,1.1 h2.1 q0.9,0 0.9,0.9 v4.9 h-3 z" fill="#7fa6cc"/><path d="M8.2,0.8 v6.6" fill="none" stroke="#5d6f85" stroke-width=".8"/></g>
<g transform="translate(76,638)"><use href="#bm" fill="url(#gBm)" stroke="#4c4f55" stroke-width="1"/><path d="M8.2,1.1 h2.1 q0.9,0 0.9,0.9 v4.9 h-3 z" fill="#7fa6cc"/><path d="M8.2,0.8 v6.6" fill="none" stroke="#5d6f85" stroke-width=".8"/></g>
</g>
<g id="specks" fill="#1a1a1a">
<circle cx="723.4" cy="124.5" r="0.7"/><circle cx="730" cy="128" r="0.6"/><circle cx="646.5" cy="158.4" r="0.6"/><circle cx="571" cy="166.6" r="0.5"/><circle cx="752.8" cy="166.6" r="0.5"/><circle cx="689.5" cy="187" r="0.7"/><circle cx="500.4" cy="188.7" r="0.5"/><circle cx="508" cy="192" r="0.4"/><circle cx="718.9" cy="222.2" r="0.8"/><circle cx="705" cy="234" r="0.5"/><circle cx="766" cy="236.7" r="0.5"/><circle cx="773" cy="236.7" r="0.5"/><circle cx="799" cy="231" r="0.5"/><circle cx="449" cy="238.5" r="0.5"/><circle cx="516.7" cy="249" r="0.6"/><circle cx="522" cy="248" r="0.7"/><circle cx="781.3" cy="262" r="1.3"/><circle cx="768.6" cy="283" r="0.5"/><circle cx="743.7" cy="335.7" r="0.6"/><circle cx="823" cy="369" r="0.8"/><circle cx="827.4" cy="419.8" r="0.6"/><circle cx="431.7" cy="454.6" r="0.5"/><circle cx="430.8" cy="486.3" r="0.6"/><circle cx="443" cy="518" r="0.6"/><circle cx="454" cy="539" r="0.4"/><circle cx="818" cy="554" r="0.6"/><circle cx="796.2" cy="574.3" r="2.6"/><circle cx="594.5" cy="561" r="0.4"/><circle cx="691.7" cy="591" r="0.9"/><circle cx="434" cy="604" r="0.5"/><circle cx="449.7" cy="610.7" r="0.7"/><circle cx="664.6" cy="611.6" r="0.7"/><circle cx="724.7" cy="624.7" r="0.8"/><circle cx="617" cy="604.8" r="0.4"/><circle cx="443" cy="615" r="0.5"/><circle cx="588" cy="309" r="0.5"/><circle cx="600" cy="306" r="0.4"/><circle cx="560" cy="318" r="0.4"/><circle cx="530" cy="321" r="0.4"/><circle cx="640" cy="322" r="0.4"/><circle cx="482" cy="366" r="0.4"/><circle cx="490" cy="352" r="0.4"/><circle cx="742" cy="330" r="0.4"/>
</g>
<g id="noise" fill="#6a6a6a" opacity=".55">
<circle cx="575.1" cy="319.2" r="0.35"/><circle cx="532.3" cy="322.3" r="0.45"/><circle cx="619.1" cy="325.3" r="0.4"/><circle cx="526.4" cy="321.5" r="0.35"/><circle cx="560.9" cy="322.4" r="0.35"/><circle cx="660.6" cy="319.0" r="0.4"/><circle cx="627.2" cy="322.7" r="0.35"/><circle cx="618.1" cy="321.2" r="0.4"/><circle cx="527.9" cy="324.9" r="0.45"/><circle cx="591.3" cy="322.3" r="0.45"/><circle cx="615.2" cy="323.5" r="0.35"/><circle cx="618.9" cy="323.1" r="0.45"/><circle cx="536.6" cy="323.7" r="0.35"/><circle cx="625.2" cy="322.0" r="0.5"/><circle cx="652.1" cy="321.7" r="0.5"/><circle cx="581.5" cy="320.0" r="0.4"/><circle cx="638.8" cy="320.0" r="0.45"/><circle cx="609.3" cy="325.0" r="0.5"/><circle cx="568.9" cy="325.8" r="0.35"/><circle cx="607.0" cy="319.3" r="0.45"/><circle cx="545.8" cy="321.9" r="0.35"/><circle cx="683.5" cy="318.6" r="0.45"/><circle cx="577.8" cy="320.8" r="0.5"/><circle cx="618.6" cy="321.6" r="0.35"/><circle cx="680.6" cy="321.8" r="0.35"/><circle cx="530.3" cy="323.6" r="0.5"/><circle cx="568.4" cy="321.1" r="0.45"/><circle cx="523.8" cy="321.7" r="0.4"/><circle cx="623.9" cy="321.9" r="0.4"/><circle cx="650.6" cy="319.0" r="0.4"/><circle cx="587.6" cy="325.3" r="0.5"/><circle cx="533.7" cy="321.6" r="0.45"/><circle cx="670.2" cy="324.6" r="0.45"/><circle cx="640.1" cy="325.9" r="0.5"/><circle cx="682.8" cy="319.2" r="0.4"/><circle cx="545.7" cy="323.3" r="0.35"/><circle cx="602.4" cy="322.7" r="0.45"/><circle cx="567.9" cy="319.2" r="0.45"/><circle cx="623.7" cy="320.5" r="0.4"/><circle cx="637.4" cy="322.1" r="0.35"/><circle cx="597.6" cy="325.0" r="0.5"/><circle cx="587.7" cy="321.2" r="0.5"/><circle cx="627.8" cy="318.5" r="0.35"/><circle cx="687.4" cy="321.5" r="0.35"/><circle cx="577.8" cy="318.4" r="0.35"/><circle cx="616.4" cy="322.3" r="0.45"/><circle cx="624.3" cy="318.6" r="0.4"/><circle cx="624.4" cy="319.2" r="0.45"/><circle cx="682.4" cy="322.8" r="0.5"/><circle cx="540.9" cy="324.8" r="0.5"/><circle cx="601.7" cy="320.5" r="0.4"/><circle cx="537.4" cy="320.7" r="0.45"/><circle cx="601.4" cy="323.5" r="0.35"/><circle cx="554.9" cy="325.6" r="0.45"/><circle cx="544.9" cy="322.3" r="0.35"/><circle cx="648.9" cy="320.4" r="0.35"/><circle cx="638.4" cy="320.1" r="0.45"/><circle cx="674.4" cy="320.8" r="0.4"/><circle cx="610.5" cy="324.2" r="0.45"/><circle cx="628.2" cy="322.9" r="0.4"/><circle cx="657.0" cy="324.5" r="0.4"/><circle cx="554.0" cy="321.9" r="0.35"/><circle cx="688.2" cy="324.3" r="0.5"/><circle cx="564.1" cy="323.5" r="0.45"/><circle cx="596.0" cy="325.5" r="0.45"/><circle cx="682.4" cy="320.9" r="0.4"/><circle cx="537.4" cy="321.8" r="0.45"/><circle cx="554.7" cy="323.0" r="0.35"/><circle cx="601.5" cy="323.2" r="0.35"/><circle cx="661.9" cy="319.0" r="0.5"/><circle cx="663.9" cy="309.0" r="0.5"/><circle cx="676.7" cy="305.2" r="0.45"/><circle cx="580.4" cy="311.4" r="0.5"/><circle cx="625.6" cy="308.9" r="0.35"/><circle cx="657.0" cy="302.0" r="0.4"/><circle cx="573.3" cy="307.1" r="0.5"/><circle cx="666.8" cy="301.8" r="0.5"/><circle cx="648.9" cy="304.2" r="0.4"/><circle cx="572.6" cy="309.6" r="0.35"/><circle cx="633.2" cy="311.2" r="0.5"/><circle cx="688.4" cy="302.3" r="0.4"/><circle cx="573.4" cy="302.6" r="0.4"/><circle cx="661.6" cy="303.9" r="0.5"/><circle cx="670.1" cy="300.7" r="0.45"/><circle cx="677.7" cy="307.9" r="0.5"/><circle cx="669.3" cy="310.5" r="0.4"/><circle cx="633.8" cy="306.3" r="0.35"/><circle cx="674.7" cy="309.3" r="0.35"/><circle cx="663.1" cy="301.8" r="0.4"/><circle cx="626.8" cy="308.7" r="0.35"/><circle cx="609.1" cy="306.2" r="0.5"/><circle cx="664.1" cy="301.3" r="0.35"/><circle cx="599.8" cy="303.3" r="0.35"/><circle cx="630.9" cy="306.7" r="0.35"/><circle cx="623.2" cy="307.4" r="0.4"/><circle cx="492.6" cy="357.0" r="0.5"/><circle cx="488.2" cy="348.4" r="0.45"/><circle cx="498.1" cy="375.5" r="0.4"/><circle cx="496.2" cy="343.8" r="0.35"/><circle cx="485.4" cy="351.3" r="0.4"/><circle cx="486.3" cy="346.9" r="0.45"/><circle cx="494.8" cy="375.7" r="0.4"/><circle cx="498.5" cy="365.0" r="0.45"/><circle cx="479.4" cy="375.1" r="0.5"/><circle cx="481.3" cy="378.0" r="0.5"/><circle cx="497.2" cy="344.8" r="0.4"/><circle cx="479.9" cy="356.1" r="0.5"/><circle cx="484.1" cy="346.2" r="0.45"/><circle cx="478.2" cy="353.4" r="0.45"/><circle cx="489.3" cy="356.5" r="0.35"/><circle cx="485.2" cy="359.7" r="0.45"/><circle cx="488.3" cy="340.7" r="0.4"/><circle cx="499.3" cy="342.4" r="0.45"/><circle cx="482.5" cy="376.0" r="0.4"/><circle cx="482.5" cy="343.4" r="0.5"/><circle cx="496.4" cy="366.4" r="0.45"/><circle cx="485.7" cy="360.5" r="0.5"/><circle cx="492.8" cy="341.8" r="0.35"/><circle cx="495.2" cy="345.7" r="0.35"/><circle cx="482.5" cy="338.7" r="0.35"/><circle cx="495.2" cy="341.5" r="0.4"/><circle cx="477.6" cy="374.2" r="0.5"/><circle cx="476.3" cy="379.8" r="0.5"/><circle cx="498.2" cy="349.3" r="0.4"/><circle cx="477.0" cy="367.8" r="0.35"/><circle cx="558.2" cy="355.7" r="0.4"/><circle cx="512.1" cy="356.4" r="0.45"/><circle cx="531.9" cy="354.9" r="0.5"/><circle cx="530.0" cy="354.5" r="0.45"/><circle cx="548.2" cy="365.9" r="0.35"/><circle cx="500.9" cy="362.3" r="0.4"/><circle cx="530.9" cy="355.4" r="0.5"/><circle cx="506.4" cy="363.5" r="0.5"/><circle cx="539.4" cy="359.6" r="0.5"/><circle cx="558.2" cy="356.3" r="0.4"/><circle cx="558.9" cy="356.8" r="0.4"/><circle cx="524.3" cy="356.9" r="0.35"/><circle cx="550.2" cy="352.2" r="0.45"/><circle cx="525.8" cy="352.8" r="0.5"/><circle cx="552.2" cy="361.4" r="0.45"/><circle cx="621.5" cy="369.8" r="0.35"/><circle cx="605.3" cy="367.6" r="0.5"/><circle cx="552.4" cy="368.5" r="0.45"/><circle cx="664.8" cy="369.2" r="0.4"/><circle cx="556.0" cy="370.5" r="0.4"/><circle cx="593.4" cy="367.0" r="0.5"/><circle cx="561.7" cy="368.1" r="0.4"/><circle cx="580.8" cy="370.1" r="0.35"/><circle cx="582.6" cy="367.4" r="0.5"/><circle cx="620.1" cy="368.6" r="0.45"/><circle cx="587.3" cy="367.9" r="0.4"/><circle cx="628.3" cy="369.9" r="0.5"/><circle cx="640.7" cy="369.9" r="0.5"/><circle cx="569.3" cy="369.9" r="0.4"/><circle cx="557.1" cy="370.3" r="0.5"/><circle cx="637.1" cy="370.2" r="0.4"/><circle cx="657.5" cy="370.0" r="0.35"/><circle cx="647.9" cy="369.3" r="0.4"/><circle cx="645.1" cy="336.6" r="0.45"/><circle cx="697.6" cy="341.3" r="0.5"/><circle cx="673.5" cy="344.8" r="0.4"/><circle cx="669.4" cy="336.0" r="0.35"/><circle cx="684.9" cy="343.0" r="0.35"/><circle cx="679.6" cy="336.9" r="0.5"/><circle cx="655.1" cy="337.0" r="0.45"/><circle cx="654.1" cy="346.6" r="0.4"/>
</g>

</svg>
</body>
</html>
